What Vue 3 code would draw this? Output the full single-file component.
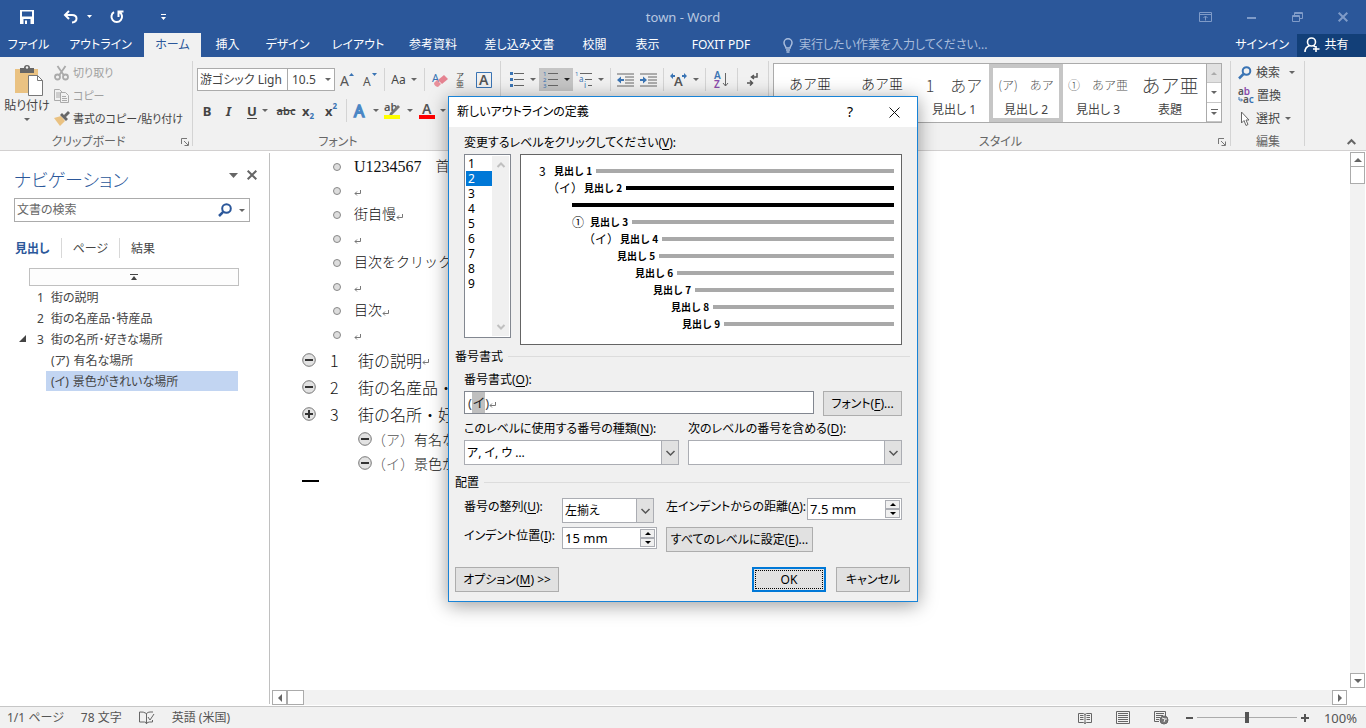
<script setup>
import { ref } from 'vue'

const tabs = ['ファイル', 'アウトライン', 'ホーム', '挿入', 'デザイン', 'レイアウト', '参考資料', '差し込み文書', '校閲', '表示', 'FOXIT PDF']
const activeTab = ref('ホーム')

const styles = [
  { sample: 'あア亜', name: '標準', kind: 'serif' },
  { sample: 'あア亜', name: '行間詰め', kind: 'serif' },
  { sample: '1　あア', name: '見出し 1', kind: 'large' },
  { sample: '(ア)　あア', name: '見出し 2', kind: 'light', selected: true },
  { sample: '①　あア亜', name: '見出し 3', kind: 'light' },
  { sample: 'あア亜', name: '表題', kind: 'title' }
]

const headings = [
  { no: '1', text: '街の説明', level: 1 },
  { no: '2', text: '街の名産品･特産品', level: 1 },
  { no: '3', text: '街の名所･好きな場所', level: 1, open: true },
  { no: '(ア)', text: '有名な場所', level: 2 },
  { no: '(イ)', text: '景色がきれいな場所', level: 2, selected: true }
]

const bodyLines = [
  { latin: 'U1234567', text: '　首' },
  { text: '', mark: true },
  { text: '街自慢', mark: true },
  { text: '', mark: true },
  { text: '目次をクリック' },
  { text: '', mark: true },
  { text: '目次', mark: true },
  { text: '', mark: true }
]

const outline = [
  { no: '1', text: '街の説明', sign: '-', level: 1, mark: true },
  { no: '2', text: '街の名産品・', sign: '-', level: 1 },
  { no: '3', text: '街の名所・好', sign: '+', level: 1 },
  { no: '（ア）', text: '有名な', sign: '-', level: 2 },
  { no: '（イ）', text: '景色が', sign: '-', level: 2 }
]

const levels = [1, 2, 3, 4, 5, 6, 7, 8, 9]
const level = ref(2)

const preview = [
  { indent: 18, no: '3', noWidth: 15, label: '見出し 1' },
  { indent: 26, no: '（イ）', noWidth: 37, label: '見出し 2', active: true },
  { indent: 51, active: true },
  { indent: 51, no: '①', noWidth: 18, label: '見出し 3' },
  { indent: 62, no: '（イ）', noWidth: 37, label: '見出し 4' },
  { indent: 96, label: '見出し 5' },
  { indent: 114, label: '見出し 6' },
  { indent: 132, label: '見出し 7' },
  { indent: 150, label: '見出し 8' },
  { indent: 161, label: '見出し 9' }
]
</script>

<template>
  <div class="app">
    <header class="titlebar">
      <div class="quick">
        <button class="q save" aria-label="上書き保存">
          <svg width="14" height="14" viewBox="0 0 14 14"><path d="M0 0h14v14H0z M2 1.5v5h10v-5z M3.5 9v5h7V9z" fill="#fff" fill-rule="evenodd" /><path d="M5 10.5h2V14H5z" fill="#fff" /></svg>
        </button>
        <button class="q undo" aria-label="元に戻す">
          <svg width="15" height="14" viewBox="0 0 15 14" fill="none" stroke="#fff" stroke-width="2"><path d="M6 1 2 5l4 4M2 5h7c6 0 6 7 0 7.500" /></svg>
        </button>
        <button class="q tiny" aria-label="元に戻す一覧"><svg width="5" height="3"><path d="M0 0h5L2.500 3z" fill="#fff" /></svg></button>
        <button class="q redo" aria-label="繰り返し">
          <svg width="14" height="14" viewBox="0 0 14 14" fill="none" stroke="#fff" stroke-width="2"><path d="M4 2.200A5.300 5.300 0 1 0 9.500 2.200M8.500 7V1.500H13.500" /></svg>
        </button>
        <button class="q more" aria-label="カスタマイズ"><svg width="5" height="6"><path d="M0 0h5v1H0zM0 3h5L2.500 6z" fill="#fff" /></svg></button>
      </div>
      <h1 class="doc-name">town - Word</h1>
      <div class="window-buttons">
        <button aria-label="リボンの表示オプション"><svg width="13" height="10" viewBox="0 0 13 10" fill="none" stroke="#7f9bc8"><path d="M.5.5h12v9H.5zM1 2.500h11M6.500 8.500v-4M4.500 6l2-2 2 2" /></svg></button>
        <button aria-label="最小化"><svg width="9" height="10"><path d="M0 5h9v2H0z" fill="#7f9bc8" /></svg></button>
        <button aria-label="元のサイズ"><svg width="11" height="10" viewBox="0 0 11 10" fill="none" stroke="#7f9bc8"><path d="M.5 3.500h7v6h-7zM.5 4.500h7M2.500 3V.5h8v6H8M3 1.500h7" /></svg></button>
        <button aria-label="閉じる"><svg width="10" height="10" viewBox="0 0 10 10" stroke="#7f9bc8" stroke-width="2"><path d="m.7.7 8.600 8.600m0-8.600L.7 9.300" /></svg></button>
      </div>
    </header>

    <nav class="tabs">
      <div class="tab-list">
        <button v-for="t in tabs" :key="t" class="tab" :class="{ active: t === activeTab }" @click="activeTab = t">{{ t }}</button>
      </div>
      <button class="tell">
        <svg width="10" height="15" viewBox="0 0 10 15" fill="none" stroke="#a9bddc" stroke-width="1.500"><path d="M3 10C3 8 1 7.500 1 4.800a4 4 0 0 1 8 0C9 7.500 7 8 7 10zM3 12h4M3.500 14h3" /></svg>
        実行したい作業を入力してください...
      </button>
      <a class="signin" href="#">サインイン</a>
      <button class="share">
        <svg width="16" height="16" viewBox="0 0 16 16" fill="none" stroke="#fff" stroke-width="1.600"><circle cx="7.500" cy="5" r="4" /><path d="M1 15c0-4 2-5.500 4.500-6.500M9.500 8.500l1.500 1.500M12 9v6M9 12h6.500" /></svg>
        共有
      </button>
    </nav>

    <section class="ribbon">
      <div class="group clipboard">
        <div class="group-body">
          <button class="paste">
            <svg width="30" height="31" viewBox="0 0 30 31"><path d="M1 4h23v24H1z" fill="#eac282" /><path d="M6 3h4a3 3 0 0 1 6 0h4v5H6z" fill="#666" /><circle cx="13" cy="2.500" r="1.200" fill="#f1f1f1" /><path d="M14.500 10.500h9l5 5v15h-14z" fill="#fff" stroke="#777" /><path d="M23.500 10.500v5h5" fill="none" stroke="#777" /></svg>
            <span>貼り付け</span>
            <i class="caret"></i>
          </button>
          <div class="clip-list">
            <button class="dim"><svg width="16" height="16" viewBox="0 0 16 16" fill="none" stroke="#aaa" stroke-width="1.800"><path d="M3.500 1 10 10.500M11.500 1 5 10.500" /><circle cx="3.500" cy="12" r="2.500" /><circle cx="11.500" cy="12" r="2.500" /></svg>切り取り</button>
            <button class="dim"><svg width="16" height="16" viewBox="0 0 16 16" fill="#f1f1f1" stroke="#aaa"><path d="M.5 1.500h5l3 3v8h-8zM2 5h4M2 7h4M2 9h4" /><path d="M6.500 4.500h5l3 3v7h-8zM8 8.500h4M8 10.500h5M8 12.500h5" /></svg>コピー</button>
            <button><svg width="16" height="16" viewBox="0 0 16 16"><path d="m0 7 7-2 4 5-5 5z" fill="#eac282" /><path d="m6 4 2-2 6 6-2 2zM10 4l4-4 2 2-4 4z" fill="#666" /></svg>書式のコピー/貼り付け</button>
          </div>
        </div>
        <div class="group-label">クリップボード</div>
        <button class="launcher" aria-label="クリップボードの設定"><svg width="8" height="8" viewBox="0 0 8 8" fill="none" stroke="#777"><path d="M.5 6V.5H6M3 3l4 4M7.500 3.500v4h-4" /></svg></button>
      </div>

      <div class="group font">
        <div class="group-body">
          <div class="font-row first">
            <button class="combo">游ゴシック Ligh<i class="caret"></i></button>
            <button class="combo size">10.5<i class="caret"></i></button>
            <button aria-label="フォントの拡大"><svg width="16" height="18"><text x="1" y="15" font-size="14" fill="#555">A</text><path d="M10 5h5l-2.500-3z" fill="#3a74b4" /></svg></button>
            <button aria-label="フォントの縮小"><svg width="16" height="18"><text x="1" y="15" font-size="12" fill="#555">A</text><path d="M10 2h5l-2.500 3z" fill="#3a74b4" /></svg></button>
            <i class="sep"></i>
            <button class="aa">Aa<i class="caret"></i></button>
            <i class="sep"></i>
            <button aria-label="書式のクリア"><svg width="18" height="18" viewBox="0 0 18 18"><text x="1" y="11" font-size="11" fill="#3a74b4">A</text><path d="m3 12 3-3 4 4-3 3q-4-1-4-4" fill="#e9909b" /><path d="m7 9 6-5 4 4-6 5z" fill="#e58391" /></svg></button>
            <button class="ruby" aria-label="ルビ"><span>ア</span><span>亜</span></button>
            <button aria-label="囲み線"><svg width="16" height="16"><path d="M.5.5h15v15H.5z" fill="none" stroke="#3a74b4" /><text x="3" y="13" font-size="14" font-weight="600" fill="#555">A</text></svg></button>
          </div>
          <div class="font-row second">
            <button class="b">B</button>
            <button class="i">I</button>
            <button class="u"><u>U</u><i class="caret"></i></button>
            <button class="s"><s>abc</s></button>
            <button class="b">x<sub>2</sub></button>
            <button class="b">x<sup>2</sup></button>
            <i class="sep"></i>
            <button aria-label="文字の効果"><svg width="16" height="18"><text x="2" y="15" font-size="16" fill="#fff" stroke="#4b87c5" stroke-width="1.500">A</text></svg><i class="caret"></i></button>
            <button aria-label="蛍光ペン"><svg width="18" height="18"><text x="0" y="9" font-size="11" font-weight="600" fill="#555">ab</text><path d="m6 11 8-8 2 2-8 8-3 1z" fill="#777" /><path d="M0 13h16v4H0z" fill="#ff0" /></svg><i class="caret"></i></button>
            <button aria-label="フォントの色"><svg width="16" height="18"><text x="3" y="12" font-size="14" font-weight="600" fill="#555">A</text><path d="M0 13h16v4H0z" fill="#f00" /></svg><i class="caret"></i></button>
          </div>
        </div>
        <div class="group-label">フォント</div>
      </div>

      <div class="group para">
        <div class="group-body">
          <div class="para-row">
            <button class="split" aria-label="箇条書き"><svg width="15" height="17" fill="#3a74b4"><path d="M1 1h3v3H1zM1 7h3v3H1zM1 13h3v3H1z" /><path d="M5 2h10v1H5zM5 8h10v1H5zM5 14h10v1H5z" fill="#666" /></svg><i class="caret"></i></button>
            <button class="split on" aria-label="段落番号"><svg width="15" height="17" fill="#3a74b4"><text x="0" y="5" font-size="6">1</text><text x="0" y="11" font-size="6">2</text><text x="0" y="17" font-size="6">3</text><path d="M5 2h10v1H5zM5 8h10v1H5zM5 14h10v1H5z" fill="#666" /></svg><i class="caret"></i></button>
            <button class="split" aria-label="アウトライン"><svg width="17" height="17" fill="#3a74b4"><text x="0" y="5" font-size="6">1</text><text x="4" y="11" font-size="8">a</text><text x="9" y="17" font-size="8">i</text><path d="M5 2h12v1H5zM10 8h7v1h-7zM13 14h4v1h-4z" fill="#666" /></svg><i class="caret"></i></button>
            <i class="sep"></i>
            <button aria-label="インデントを減らす"><svg width="17" height="14"><path d="M0 1h17M8 4h9M8 7h9M8 10h9M0 13h17" stroke="#666" /><path d="M0 7l4-3.500V6h3v2H4v2.500z" fill="#3a74b4" /></svg></button>
            <button aria-label="インデントを増やす"><svg width="17" height="14"><path d="M0 1h17M8 4h9M8 7h9M8 10h9M0 13h17" stroke="#666" /><path d="M7 7 3 3.500V6H0v2h3v2.500z" fill="#3a74b4" /></svg></button>
            <i class="sep"></i>
            <button class="split" aria-label="拡張書式"><svg width="17" height="15"><text x="4" y="14" font-size="13" font-weight="600" fill="#555">A</text><path d="M0 4l3-3v2h2v2H3v2zM17 4l-3-3v2h-2v2h2v2z" fill="#3a74b4" /></svg><i class="caret"></i></button>
            <i class="sep"></i>
            <button aria-label="並べ替え"><svg width="15" height="18"><text x="0" y="8" font-size="10" font-weight="600" fill="#3a74b4">A</text><text x="0" y="17" font-size="10" font-weight="600" fill="#8a4bab">Z</text><path d="M11.500 2v13M9 12l2.500 3 2.500-3" fill="none" stroke="#666" /></svg></button>
            <i class="sep"></i>
            <button aria-label="編集記号"><svg width="11" height="13" fill="none" stroke="#555" stroke-width="1.500"><path d="M10 0v4H5M7 2 4.500 4 7 6M0 10h5M3 7.500 5.500 10 3 12.500" /></svg></button>
          </div>
        </div>
      </div>

      <div class="group style-group">
        <div class="group-body">
          <div class="gallery">
            <button v-for="s in styles" :key="s.name" class="style-item" :class="[s.kind, { selected: s.selected }]">
              <span class="sample">{{ s.sample }}</span>
              <span class="style-name">{{ s.name }}</span>
            </button>
            <div class="gallery-scroll">
              <button class="off" aria-label="前へ"><i class="caret up"></i></button>
              <button aria-label="次へ"><i class="caret"></i></button>
              <button aria-label="その他"><i class="bar"></i><i class="caret"></i></button>
            </div>
          </div>
        </div>
        <div class="group-label">スタイル</div>
        <button class="launcher" aria-label="スタイルの設定"><svg width="8" height="8" viewBox="0 0 8 8" fill="none" stroke="#777"><path d="M.5 6V.5H6M3 3l4 4M7.500 3.500v4h-4" /></svg></button>
      </div>

      <div class="group edit">
        <div class="group-body">
          <div class="clip-list">
            <button><svg width="14" height="14" viewBox="0 0 14 14" fill="none" stroke="#3a74b4" stroke-width="2"><circle cx="8.500" cy="5" r="3.800" /><path d="M5.500 8 1 12.500" stroke-width="2.500" /></svg>検索<i class="caret far"></i></button>
            <button class="replace"><svg width="17" height="16"><text x="0" y="7" font-size="10" font-weight="600" fill="#555">a<tspan fill="#8a4bab">b</tspan></text><text x="5" y="15" font-size="10" font-weight="600" fill="#555">a<tspan fill="#3a74b4">c</tspan></text><path d="M1 9v3h3M3 10.500 4.500 12 3 13.500" fill="none" stroke="#3a74b4" /></svg>置換</button>
            <button><svg width="14" height="16" viewBox="0 0 14 16" fill="#fff" stroke="#666"><path d="M3.500 1v11l2.500-2.500 2 5 2-1-2-4.500H11z" /></svg>選択<i class="caret"></i></button>
          </div>
        </div>
        <div class="group-label">編集</div>
      </div>
      <button class="collapse" aria-label="リボンを折りたたむ"><svg width="9" height="6" fill="none" stroke="#666" stroke-width="2"><path d="M.7 5 4.500 1.200 8.300 5" /></svg></button>
    </section>

    <main class="work">
      <aside class="navpane">
        <div class="nav-head">
          <h2>ナビゲーション</h2>
          <button aria-label="オプション"><svg width="9" height="5"><path d="M0 0h9L4.500 5z" fill="#666" /></svg></button>
          <button aria-label="閉じる"><svg width="10" height="10" stroke="#666" stroke-width="2"><path d="m.7.7 8.600 8.600m0-8.600L.7 9.300" /></svg></button>
        </div>
        <div class="search">
          <input type="text" placeholder="文書の検索" aria-label="文書の検索" />
          <svg width="14" height="14" viewBox="0 0 14 14" fill="none" stroke="#2b579a" stroke-width="2"><circle cx="8.500" cy="5.500" r="4.300" /><path d="M5.200 8.800 1 13" stroke-width="2.500" /></svg>
          <i class="caret"></i>
        </div>
        <div class="nav-tabs">
          <button class="active">見出し</button>
          <button>ページ</button>
          <button>結果</button>
        </div>
        <button class="to-top" aria-label="先頭へ"><svg width="8" height="6"><path d="M0 0h8v1H0zM1 6l3-4 3 4z" fill="#444" /></svg></button>
        <ul class="headings">
          <li v-for="h in headings" :key="h.text" :class="['lv' + h.level, { selected: h.selected }]">
            <span class="twisty"><svg v-if="h.open" width="7" height="7"><path d="M7 0v7H0z" fill="#444" /></svg></span>
            <a href="#"><span class="no">{{ h.no }}</span>{{ h.text }}</a>
          </li>
        </ul>
      </aside>

      <section class="doc">
        <div class="page">
          <p v-for="(l, i) in bodyLines" :key="i" class="line">
            <i class="dot"></i><span v-if="l.latin" class="latin">{{ l.latin }}</span>{{ l.text }}<svg v-if="l.mark" class="ret" width="7" height="6" viewBox="0 0 7 6" fill="none" stroke="#777"><path d="M6.500 0v3.500H1M3 1.500l-2 2 2 2" /></svg>
          </p>
          <p v-for="o in outline" :key="o.no" class="head" :class="'h' + o.level">
            <svg class="knob" width="14" height="14" viewBox="0 0 14 14"><circle cx="7" cy="7" r="6.300" fill="#e2e2e2" stroke="#777" /><path :d="o.sign === '+' ? 'M3 6h3V3h2v3h3v2H8v3H6V8H3z' : 'M3 6h8v2H3z'" fill="#333" /></svg>
            <span class="hno">{{ o.no }}</span><span>{{ o.text }}</span><svg v-if="o.mark" class="ret" width="7" height="6" viewBox="0 0 7 6" fill="none" stroke="#777"><path d="M6.500 0v3.500H1M3 1.500l-2 2 2 2" /></svg>
          </p>
          <div class="end-mark"></div>
        </div>
        <div class="vscroll">
          <button aria-label="上へ"><i class="tri up"></i></button>
          <div class="thumb"></div>
          <span class="fill"></span>
          <button aria-label="下へ"><i class="tri"></i></button>
        </div>
        <div class="hscroll">
          <button aria-label="左へ"><i class="tri left"></i></button>
          <div class="thumb"></div>
          <span class="fill"></span>
          <button aria-label="右へ"><i class="tri right"></i></button>
        </div>
      </section>
    </main>

    <footer class="status">
      <span>1/1 ページ</span>
      <span>78 文字</span>
      <svg width="16" height="14" viewBox="0 0 16 14" fill="none" stroke="#666"><path d="M7.500 13V2.500q-3-2-7-1.500v10h5q2 0 2 2 0-2 3-2h3V9M7.500 2.500Q9 1 11 1h3M9 6l2 3 4-6" /></svg>
      <span>英語 (米国)</span>
      <div class="view">
        <button aria-label="閲覧モード"><svg width="14" height="12" fill="none" stroke="#666"><path d="M.5 1.500h5l1.500 1 1.500-1h5v9h-5l-1.500 1-1.500-1h-5zM7 2v10M2 3.500h3.500M2 5.500h3.500M2 7.500h3.500M8.500 3.500H12M8.500 5.500H12M8.500 7.500H12" /></svg></button>
        <button aria-label="印刷レイアウト"><svg width="14" height="13" fill="none" stroke="#666"><path d="M.5.5h13v12H.5zM2 2.500h10M2 4.500h10M2 6.500h10M2 8.500h10M2 10.500h10" /></svg></button>
        <button aria-label="Web レイアウト"><svg width="15" height="14" fill="none" stroke="#666"><path d="M5 10.500H.5V.5h11V5M2 2.500h8M2 4.500h7M2 6.500h4M2 8.500h3" /><circle cx="10" cy="9" r="4" fill="#777" /><path d="M8 7l3 1-1 3M12 7v2" stroke="#f1f1f1" /></svg></button>
        <button aria-label="縮小"><svg width="7" height="2"><path d="M0 0h7v2H0z" fill="#555" /></svg></button>
        <input type="range" min="10" max="190" value="100" aria-label="ズーム" />
        <button aria-label="拡大"><svg width="8" height="8"><path d="M3 0h2v3h3v2H5v3H3V5H0V3h3z" fill="#555" /></svg></button>
        <span class="zoom">100%</span>
      </div>
    </footer>

    <form class="dialog" role="dialog" aria-labelledby="dlg-title" @submit.prevent>
      <div class="dlg-bar">
        <h2 id="dlg-title">新しいアウトラインの定義</h2>
        <button type="button" class="help">?</button>
        <button type="button" aria-label="閉じる"><svg width="11" height="11" stroke="#111"><path d="m.5.5 10 10m0-10-10 10" /></svg></button>
      </div>
      <div class="dlg-body">
        <label class="lbl level-lbl" for="lv">変更するレベルをクリックしてください(<u>V</u>):</label>
        <div class="levels">
          <div id="lv" class="list" role="listbox" tabindex="0">
            <div class="opts">
              <div v-for="n in levels" :key="n" role="option" :aria-selected="n === level" :class="{ on: n === level }" @click="level = n">{{ n }}</div>
            </div>
            <div class="list-scroll">
              <svg width="8" height="6" fill="none" stroke="#c0c0c0" stroke-width="2"><path d="M.5 5 4 1.500 7.500 5" /></svg>
              <svg width="8" height="6" fill="none" stroke="#c0c0c0" stroke-width="2"><path d="M.5 1 4 4.500 7.500 1" /></svg>
            </div>
          </div>
          <div class="preview">
            <div v-for="(p, i) in preview" :key="i" class="prow" :class="{ active: p.active }" :style="{ paddingLeft: p.indent + 'px' }">
              <span v-if="p.no" class="pno" :style="{ width: p.noWidth + 'px' }">{{ p.no }}</span>
              <span v-if="p.label" class="plabel">{{ p.label }}</span>
              <span class="pbar"></span>
            </div>
          </div>
        </div>

        <h3 class="section">番号書式</h3>
        <div class="inset format">
          <label class="lbl" for="fmt">番号書式(<u>O</u>):</label>
          <div class="format-row">
            <div id="fmt" class="richbox" role="textbox" contenteditable="true">(<mark>イ</mark>)<svg class="ret" width="7" height="6" viewBox="0 0 7 6" fill="none" stroke="#777"><path d="M6.500 0v3.500H1M3 1.500l-2 2 2 2" /></svg></div>
            <button type="button" class="btn">フォント(<u>F</u>)...</button>
          </div>
          <div class="kinds">
            <div>
              <label class="lbl" for="kind">このレベルに使用する番号の種類(<u>N</u>):</label>
              <div class="sel"><select id="kind"><option>ア, イ, ウ …</option></select><span><svg width="9" height="6" fill="none" stroke="#555" stroke-width="1.500"><path d="M.5 1 4.500 5 8.500 1" /></svg></span></div>
            </div>
            <div>
              <label class="lbl" for="incl">次のレベルの番号を含める(<u>D</u>):</label>
              <div class="sel"><select id="incl"><option></option></select><span><svg width="9" height="6" fill="none" stroke="#555" stroke-width="1.500"><path d="M.5 1 4.500 5 8.500 1" /></svg></span></div>
            </div>
          </div>
        </div>

        <h3 class="section">配置</h3>
        <div class="inset place">
          <label class="lbl" for="align">番号の整列(<u>U</u>):</label>
          <div class="sel align"><select id="align"><option>左揃え</option></select><span><svg width="9" height="6" fill="none" stroke="#555" stroke-width="1.500"><path d="M.5 1 4.500 5 8.500 1" /></svg></span></div>
          <div class="distance">
            <label class="lbl" for="dist">左インデントからの距離(<u>A</u>):</label>
            <div class="spin"><input id="dist" type="text" value="7.5 mm" /><div><button type="button" aria-label="増やす"><i class="tri up"></i></button><button type="button" aria-label="減らす"><i class="tri"></i></button></div></div>
          </div>
          <label class="lbl" for="ind">インデント位置(<u>I</u>):</label>
          <div class="spin"><input id="ind" type="text" value="15 mm" /><div><button type="button" aria-label="増やす"><i class="tri up"></i></button><button type="button" aria-label="減らす"><i class="tri"></i></button></div></div>
          <button type="button" class="btn all">すべてのレベルに設定(<u>E</u>)...</button>
        </div>

        <div class="actions">
          <button type="button" class="btn opt">オプション(<u>M</u>) &gt;&gt;</button>
          <button type="submit" class="btn ok"><span>OK</span></button>
          <button type="button" class="btn cancel">キャンセル</button>
        </div>
      </div>
    </form>
  </div>
</template>

<style>
html, body { height: 100%; }
body { overflow: hidden; }
</style>

<style scoped>
.app {
  --blue: #2b579a;
  position: relative;
  display: flex;
  flex-direction: column;
  height: 100vh;
  background: #fff;
  color: #444;
  font: 12px/16px "Noto Sans", "Noto Sans CJK JP", sans-serif;
  font-feature-settings: "palt";
  white-space: nowrap;
}
.app * { box-sizing: border-box; }
.app svg { flex: none; overflow: visible; }
button, input, select { font: inherit; color: inherit; font-feature-settings: inherit; }
button { background: none; border: 0; padding: 0; margin: 0; white-space: nowrap; display: flex; align-items: center; justify-content: center; }
h1, h2, h3, p, ul { margin: 0; padding: 0; font-weight: 400; font-size: inherit; }
a { color: inherit; text-decoration: none; }
u { text-underline-offset: 2px; }
.caret { flex: none; width: 0; height: 0; border: 3px solid transparent; border-top-color: #666; border-bottom: 0; }
.caret.up { border-top: 0; border-bottom: 3px solid #ababab; }
.tri { width: 0; height: 0; border: 4px solid transparent; border-top-color: #666; border-bottom: 0; }
.tri.up { border-top: 0; border-bottom: 4px solid #666; }
.tri.left { border: 4px solid transparent; border-right-color: #666; border-left: 0; }
.tri.right { border: 4px solid transparent; border-left-color: #666; border-right: 0; }

.titlebar { display: grid; grid-template-columns: 1fr auto 1fr; align-items: center; height: 33px; background: var(--blue); color: #b9c8e0; }
.quick { display: flex; align-items: center; height: 30px; padding-left: 14px; }
.q { height: 24px; width: 26px; }
.undo { margin-left: 17px; }
.tiny { width: 12px; }
.redo { margin-left: 9px; }
.more { margin-left: 20px; }
.doc-name { font-size: 13px; }
.window-buttons { display: flex; justify-content: flex-end; height: 30px; }
.window-buttons button { width: 46px; }

.tabs { display: flex; align-items: center; height: 24px; background: var(--blue); color: #fff; }
.tab-list { display: grid; grid-template-columns: 57px 87px 57px 53px 67px 74px 76px 97px 53px 53px 94px; height: 24px; }
.tab { height: 24px; }
.tab.active { background: #f1f1f1; color: var(--blue); }
.tell { gap: 6px; padding-left: 15px; color: #a9bddc; }
.signin { margin-left: auto; padding: 0 8px; }
.share { gap: 4px; width: 69px; height: 23px; padding-right: 10px; background: #123f78; }

.ribbon { position: relative; display: flex; height: 94px; background: #f1f1f1; border-bottom: 1px solid #d2d0d0; }
.group { position: relative; display: grid; grid-template-rows: 77px 16px; }
.group::after { content: ""; position: absolute; right: 0; top: 4px; bottom: 4px; width: 1px; background: #d4d4d4; }
.group-label { text-align: center; color: #666; }
.launcher { position: absolute; right: 4px; bottom: 4px; }
.clipboard { width: 193px; }
.clipboard .group-label { padding-right: 16px; }
.clipboard .group-body { display: flex; }
.paste { flex-direction: column; justify-content: flex-start; width: 54px; padding-top: 8px; gap: 2px; }
.paste svg { margin-left: 4px; }
.paste .caret { margin-top: 2px; }
.clip-list { display: flex; flex-direction: column; padding-top: 4px; }
.clip-list button { height: 23px; justify-content: flex-start; gap: 3px; }
.clip-list .dim { color: #a0a0a0; }
.clipboard .clip-list { font-size: 11px; }
.font { width: 308px; }
.font .group-label { padding-right: 18px; }
.font-row { display: grid; height: 23px; padding-left: 4px; }
.font-row.first { margin-top: 11px; grid-template-columns: 91px 47px 24px 22px 6px 34px 6px 26px 14px 34px; }
.font-row.second { margin-top: 8px; grid-template-columns: 20px 23px 35px 22px 22px 24px 6px 32px 34px 34px; font-size: 13px; }
.font-row .sep, .para-row .sep { width: 1px; background: #d4d4d4; justify-self: center; }
.font-row .caret { margin-left: 5px; }
.combo { justify-content: space-between; padding: 0 3px 0 2px; background: #fff; border: 1px solid #ababab; }
.combo.size { margin-left: -1px; padding-left: 4px; }
.ruby { flex-direction: column; font-size: 8px; line-height: 8px; }
.b { font-weight: 700; }
.b sub, .b sup { font-size: 8px; line-height: 8px; color: #3a74b4; }
.b sub { margin-top: 10px; }
.b sup { margin-bottom: 10px; }
.i { font-style: italic; font-weight: 700; }
.u { font-weight: 700; }
.s { font-size: 11px; font-weight: 600; }
.para { width: 268px; }
.para-row { display: grid; grid-template-columns: 34px 34px 33px 8px 23px 23px 7px 35px 7px 24px 9px 20px; height: 23px; margin-top: 11px; padding-left: 4px; }
.para-row button:not(.split) { justify-self: center; }
.split { gap: 6px; }
.split.on { background: #c5c5c5; }
.split.on .caret { border-top-color: #222; }
.style-group { width: 462px; }
.style-group .launcher { right: 5px; }
.gallery { display: grid; grid-template-columns: repeat(6, 72px) 15px; height: 60px; margin: 6px 10px 0 4px; background: #fff; border: 1px solid #ababab; }
.style-item { display: grid; grid-template-rows: 31px 18px; justify-content: center; justify-items: center; align-items: center; padding-top: 5px; overflow: hidden; align-content: start; }
.style-item.selected { margin: 0 -1px; padding-top: 1px; border: 4px solid #c6c6c6; }
.sample { font-size: 14px; line-height: 24px; font-feature-settings: normal; font-family: "Noto Sans CJK JP", sans-serif; font-weight: 300; }
.serif .sample { font-family: "Liberation Serif", "Noto Sans CJK JP", serif; color: #222; }
.large .sample { font-size: 16px; }
.light .sample { font-size: 12px; color: #555; }
.title .sample { font-size: 19px; }
.style-name { padding-top: 2px; }
.gallery-scroll { display: grid; grid-template-rows: 1fr 1fr 1fr; border-left: 1px solid #ababab; }
.gallery-scroll button { flex-direction: column; gap: 2px; border-bottom: 1px solid #c6c6c6; }
.gallery-scroll .off { background: #e1e1e1; }
.bar { width: 7px; height: 1px; background: #666; }
.edit { width: 74px; }
.edit .group-body { padding-left: 7px; }
.edit .clip-list button { gap: 4px; }
.edit .clip-list .replace { gap: 2px; }
.edit .caret { margin-left: 1px; }
.edit .caret.far { margin-left: 5px; }
.collapse { position: absolute; right: 10px; bottom: 5px; }

.work { flex: 1; display: flex; min-height: 0; }
.navpane { width: 270px; margin: 2px 0; border-right: 1px solid #c0c0c0; }
.nav-head { display: flex; align-items: center; height: 44px; padding: 10px 12px 0 14px; color: #444; gap: 9px; }
.nav-head h2 { flex: 1; font-size: 18px; line-height: 26px; font-weight: 300; color: var(--blue); }
.nav-head button { padding-bottom: 10px; }
.search { display: flex; align-items: center; gap: 7px; margin: 1px 19px 0 14px; height: 24px; padding: 0 4px 0 2px; border: 1px solid #ababab; background: #fff; }
.search input { flex: 1; min-width: 0; border: 0; outline: 0; padding: 0; background: none; }
.search input::placeholder { color: #666; opacity: 1; }
.nav-tabs { display: flex; padding: 16px 0 0 4px; }
.nav-tabs button { height: 20px; padding: 2px 11px 0; border-left: 1px solid #d8d8d8; }
.nav-tabs button:first-child { border-left: 0; }
.nav-tabs .active { font-weight: 700; color: var(--blue); }
.to-top { width: 210px; height: 18px; margin: 10px 0 0 29px; border: 1px solid #c0c0c0; background: #fdfdfd; }
.headings { list-style: none; padding-right: 31px; }
.headings li { display: grid; grid-template-columns: 34px 1fr; align-items: center; height: 21px; }
.headings .lv2 { grid-template-columns: 46px 1fr; }
.twisty { display: flex; padding-left: 19px; }
.headings a { padding: 2px 0 0 3px; line-height: 18px; }
.headings .no { display: inline-block; min-width: 14px; }
.lv2 .no { margin-right: 4px; }
.headings .lv2 a { padding-left: 5px; }
.headings .selected a { background: #c2d5f2; }

.doc { flex: 1; display: grid; grid-template-columns: 1fr 19px; grid-template-rows: 1fr 16px; min-width: 0; }
.page { padding: 4px 0 0 32px; color: #111; font-feature-settings: normal; font-family: "Liberation Serif", "Noto Sans CJK JP", serif; overflow: hidden; }
.line { display: flex; align-items: center; height: 24px; padding-left: 31px; font-size: 14px; font-weight: 300; }
.latin { font-size: 16px; }
.dot { width: 8px; height: 8px; margin-right: 13px; border: 1px solid #888; border-radius: 50%; background: #ddd; }
.ret { flex: none; margin-top: 4px; }
.head { display: flex; align-items: center; height: 27px; font: 300 16px/24px "Noto Sans CJK JP", sans-serif; }
.line + .head { margin-top: -1px; }
.hno { width: 28px; margin-left: 14px; }
.h2 { height: 24px; padding-left: 56px; font-size: 14px; }
.h2 .hno { width: 42px; margin-left: 0; color: #555; }
.end-mark { width: 17px; height: 2px; margin-top: 5px; background: #000; }
.vscroll { display: flex; flex-direction: column; width: 15px; margin: 1px 0 2px 3px; }
.vscroll button { width: 15px; height: 15px; border: 1px solid #ababab; background: #fff; }
.vscroll .thumb { height: 18px; margin-top: -1px; border: 1px solid #ababab; background: #fff; }
.fill { flex: 1; background: #f2f2f2; }
.hscroll { display: flex; height: 15px; margin-left: 2px; }
.hscroll button { width: 15px; border: 1px solid #ababab; background: #fff; }
.hscroll .thumb { width: 17px; border: 1px solid #ababab; background: #fff; }
.hscroll .fill { background: #f2f2f2; }

.status { display: flex; align-items: center; height: 22px; padding: 0 9px 0 7px; gap: 17px; background: #f1f1f1; border-top: 1px solid #c6c6c6; color: #555; }
.view { display: flex; align-items: center; margin-left: auto; }
.view button:nth-child(2), .view button:nth-child(3) { margin-left: 24px; }
.view button:nth-child(4) { margin-left: 17px; }
.view input { appearance: none; width: 100px; height: 12px; margin: 0 4px; background: linear-gradient(#ababab, #ababab) center / 100% 1px no-repeat; }
.view input::-webkit-slider-thumb { appearance: none; width: 4px; height: 11px; background: #555; }
.zoom { margin-left: 15px; font-size: 13px; }

.dialog { position: absolute; top: 96px; left: 50%; width: 470px; margin-left: -235px; border: 1px solid #1883d7; background: #f0f0f0; color: #000; box-shadow: 0 3px 18px rgba(0, 0, 0, .4); }
.dlg-bar { display: flex; align-items: center; height: 30px; padding: 0 17px 0 8px; background: #fff; }
.dlg-bar h2 { flex: 1; }
.dlg-bar .help { margin-right: 36px; font-size: 14px; }
.dlg-body { padding: 7px 7px 9px 6px; }
.lbl { display: block; padding-top: 2px; line-height: 14px; }
.level-lbl { margin-left: 9px; }
.levels { display: flex; gap: 9px; align-items: flex-start; margin: 4px 9px 0; }
.list { display: flex; width: 47px; height: 184px; padding: 1px; border: 1px solid #828790; background: #fff; }
.opts { flex: 1; }
.opts div { height: 15px; padding-left: 2px; line-height: 15px; }
.opts .on { background: #0078d7; color: #fff; }
.list-scroll { display: flex; flex-direction: column; justify-content: space-between; align-items: center; width: 17px; padding: 6px 0; background: #f0f0f0; }
.preview { flex: 1; height: 191px; margin-right: -1px; padding: 7px 7px 0 0; border: 1px solid #646464; background: #fff; }
.prow { display: flex; align-items: center; height: 17px; font: 700 10px/16px "Noto Sans CJK JP", sans-serif; }
.pno { font-size: 12px; font-weight: 400; font-feature-settings: normal; }
.plabel { width: 42px; font-feature-settings: normal; }
.pbar { flex: 1; height: 4px; background: #a9a9a9; }
.prow.active .pbar { background: #000; }
.section { display: flex; align-items: center; gap: 5px; padding-top: 1px; line-height: 17px; }
.section::after { content: ""; flex: 1; height: 1px; background: #dcdcdc; }
.levels + .section { margin-top: 2px; }
.inset { margin: 0 8px 0 9px; }
.format { padding-top: 6px; }
.format-row { display: flex; align-items: flex-start; gap: 9px; margin-top: 4px; }
.richbox { flex: 1; display: flex; align-items: center; height: 23px; padding-left: 3px; border: 1px solid #828790; background: #fff; font-size: 13px; color: #444; }
.richbox mark { padding: 0 1px; background: #bfbfbf; color: #222; line-height: 21px; }
.btn { height: 25px; padding: 0; border: 1px solid #adadad; background: #e1e1e1; display: block; text-align: center; }
.format-row .btn { width: 79px; }
.kinds { display: grid; grid-template-columns: 215px 1fr; gap: 9px; margin-top: 4px; }
.sel { position: relative; height: 25px; margin-top: 4px; }
.sel select { appearance: none; width: 100%; height: 25px; padding: 0 20px 0 2px; border: 1px solid #abadb3; border-radius: 0; background: #fff; }
.sel span { position: absolute; top: 0; right: 0; display: flex; align-items: center; justify-content: center; width: 18px; height: 25px; border: 1px solid #abadb3; background: #e1e1e1; pointer-events: none; }
.format + .section { margin-top: 8px; }
.place { display: grid; grid-template-columns: 98px 95px 1fr; row-gap: 4px; align-items: start; padding-top: 7px; }
.place .sel { width: 92px; margin-top: 0; }
.distance { display: flex; justify-content: space-between; padding-left: 9px; }
.spin { display: flex; width: 95px; height: 22px; padding: 1px; border: 1px solid #abadb3; background: #fff; font-size: 13px; }
.spin input { flex: 1; min-width: 0; padding: 0 1px; border: 0; outline: 0; background: none; line-height: 18px; }
.spin div { display: grid; grid-template-rows: 9px 9px; width: 15px; }
.spin button { border: 1px solid #abadb3; background: #f0f0f0; }
.spin .tri { border-width: 3px; border-top-color: #000; border-bottom-width: 0; }
.spin .tri.up { border-top-width: 0; border-bottom: 3px solid #000; }
.all { width: 147px; margin-left: 9px; }
.actions { display: flex; gap: 10px; margin-top: 15px; }
.opt { width: 104px; margin-right: auto; }
.ok, .cancel { width: 74px; }
.ok { padding: 1px; border: 2px solid #0078d7; }
.ok span { display: block; height: 19px; line-height: 17px; border: 1px dotted #000; }
</style>
